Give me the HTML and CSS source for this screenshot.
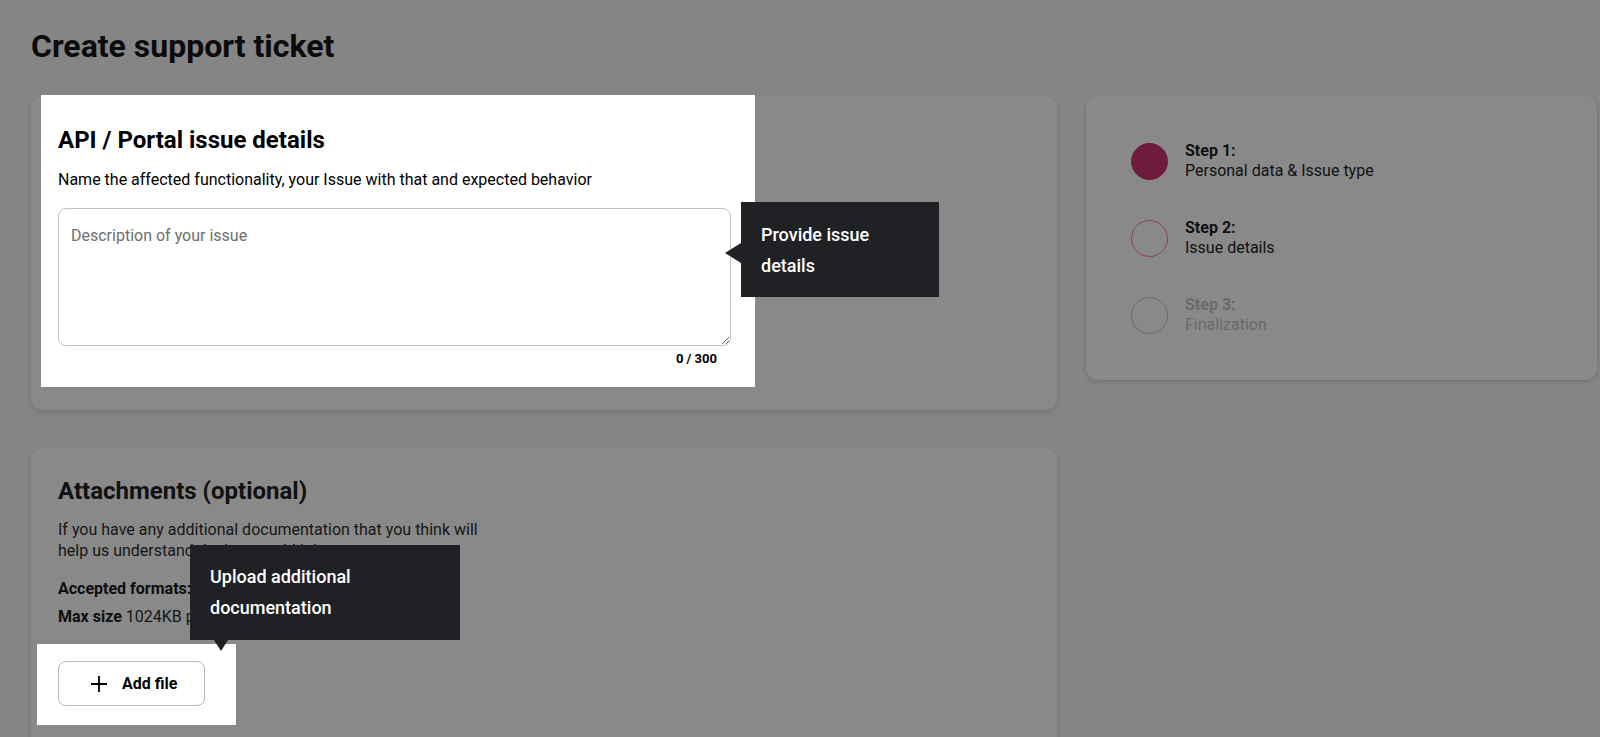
FILE: index.html
```html
<!DOCTYPE html>
<html lang="en">
  <head>
    <meta charset="UTF-8" />
    <meta name="viewport" content="width=device-width, initial-scale=1.0" />
    <title>Create support ticket</title>
    <link rel="stylesheet" href="styles.css">
  </head>
  <body>
    <h1>Create support ticket</h1>

    <div class="layout">
      <div class="venstre">
        <section class="kort kort-detaljer">
          <div class="fremhaevet">
            <h2>API / Portal issue details</h2>
            <p class="hjaelp">Name the affected functionality, your Issue with that and expected behavior</p>
            <textarea placeholder="Description of your issue"></textarea>
            <p class="taeller">0 / 300</p>
          </div>

          <div class="tip tip-venstre">Provide issue details</div>
        </section>

        <section class="kort kort-bilag">
          <h2>Attachments (optional)</h2>
          <p class="hjaelp bilag-tekst">If you have any additional documentation that you think will help us understand the issue, add it here.</p>
          <p class="linje"><b>Accepted formats:</b> JPG, PNG, PDF, TXT</p>
          <p class="linje linje-max"><b>Max size</b> 1024KB per file</p>

          <div class="fremhaevet knap-felt">
            <button class="tilfoej">
              <svg width="18" height="18" viewBox="0 0 18 18" aria-hidden="true">
                <path d="M9 1v16M1 9h16" stroke="#000" stroke-width="1.8" fill="none" />
              </svg>
              Add file
            </button>
          </div>

          <div class="tip tip-ned">Upload additional documentation</div>
        </section>
      </div>

      <aside class="kort trin">
        <div class="trin-linje">
          <span class="cirkel aktiv"></span>
          <div>
            <b>Step 1:</b>
            <span>Personal data &amp; Issue type</span>
          </div>
        </div>
        <div class="trin-linje">
          <span class="cirkel naeste"></span>
          <div>
            <b>Step 2:</b>
            <span>Issue details</span>
          </div>
        </div>
        <div class="trin-linje slukket">
          <span class="cirkel"></span>
          <div>
            <b>Step 3:</b>
            <span>Finalization</span>
          </div>
        </div>
      </aside>
    </div>
  </body>
</html>
```

FILE: styles.css
```css
html,
body {
  height: 100%;
  overflow: hidden;
}

body {
  margin: 0;
  padding: 26px 3px 0 31px;
  box-sizing: border-box;
  background-color: #858585;
  font-family: Roboto, "Noto Sans", sans-serif;
  color: #111;
}

h1 {
  margin: 0 0 30px;
  font-size: 32px;
  line-height: 40px;
  font-weight: 700;
  color: #0b0b0b;
}

h2 {
  margin: 0;
  font-size: 24px;
  line-height: 30px;
  font-weight: 700;
}

p {
  margin: 0;
}

.layout {
  display: grid;
  grid-template-columns: 1026px 1fr;
  column-gap: 29px;
  align-items: start;
}

.venstre {
  display: flex;
  flex-direction: column;
  gap: 38px;
}

.kort {
  position: relative;
  background-color: #898989;
  border-radius: 12px;
  box-shadow: 0 2px 5px rgba(0, 0, 0, 0.14);
}

.kort-detaljer {
  padding-bottom: 23px;
}

.fremhaevet {
  background-color: white;
  color: #000;
}

.kort-detaljer .fremhaevet {
  margin: -1px 0 0 10px;
  width: 714px;
  height: 292px;
  box-sizing: border-box;
  padding: 30px 24px 0 17px;
}

.hjaelp {
  margin-top: 13px;
  font-size: 16px;
  line-height: 24px;
}

textarea {
  display: block;
  margin-top: 16px;
  width: 100%;
  height: 138px;
  box-sizing: border-box;
  padding: 15px 12px;
  border: 1px solid #c2c2c2;
  border-radius: 8px;
  font-family: Roboto, "Noto Sans", sans-serif;
  font-size: 16px;
  line-height: 24px;
}

textarea::placeholder {
  color: #6e6e6e;
}

.taeller {
  margin-top: 5px;
  padding-right: 14px;
  text-align: right;
  font-size: 13px;
  line-height: 16px;
  font-weight: 700;
}

.kort-bilag {
  min-height: 400px;
  padding: 28px 27px;
}

.bilag-tekst {
  width: 425px;
  line-height: 21px;
  color: #161616;
}

.linje {
  margin-top: 17px;
  font-size: 16px;
  line-height: 21px;
  color: #161616;
}

.linje b {
  color: #0d0d0d;
}

.linje-max {
  margin-top: 7px;
}

.knap-felt {
  display: inline-block;
  margin: 17px 0 0 -21px;
  padding: 17px 31px 19px 21px;
}

.tilfoej {
  display: flex;
  align-items: center;
  gap: 14px;
  width: 147px;
  height: 45px;
  padding: 0 0 0 31px;
  box-sizing: border-box;
  border: 1px solid #b9b9b9;
  border-radius: 8px;
  background-color: white;
  font-family: Roboto, "Noto Sans", sans-serif;
  font-size: 16px;
  font-weight: 700;
  color: #000;
  cursor: pointer;
}

/* tour tooltips */
.tip {
  position: absolute;
  box-sizing: border-box;
  padding: 17px 20px 16px;
  background-color: #202124;
  color: white;
  font-size: 18px;
  line-height: 31px;
  font-weight: 500;
}

.tip::before {
  content: "";
  position: absolute;
  border: 0 solid transparent;
}

.tip-venstre {
  left: 710px;
  top: 106px;
  width: 198px;
}

.tip-venstre::before {
  left: -16px;
  top: 41px;
  border-width: 10px 16px 10px 0;
  border-right-color: #202124;
}

.tip-ned {
  left: 159px;
  top: 97px;
  width: 270px;
  padding-top: 16px;
  padding-bottom: 17px;
}

.tip-ned::before {
  left: 24px;
  bottom: -11px;
  border-width: 11px 7px 0;
  border-top-color: #202124;
}

/* steps */
.trin {
  display: flex;
  flex-direction: column;
  gap: 37px;
  padding: 45px;
}

.trin-linje {
  display: flex;
  align-items: center;
  gap: 17px;
  font-size: 16px;
  line-height: 20px;
}

.trin-linje div {
  display: flex;
  flex-direction: column;
}

.cirkel {
  width: 37px;
  height: 37px;
  box-sizing: border-box;
  border-radius: 50%;
  border: 1.5px solid #6b6b6b;
}

.cirkel.aktiv {
  background-color: #6f1b3e;
  border-color: #6f1b3e;
}

.cirkel.naeste {
  border-color: #8e3f61;
}

.slukket {
  color: #6b6b6b;
}
```
